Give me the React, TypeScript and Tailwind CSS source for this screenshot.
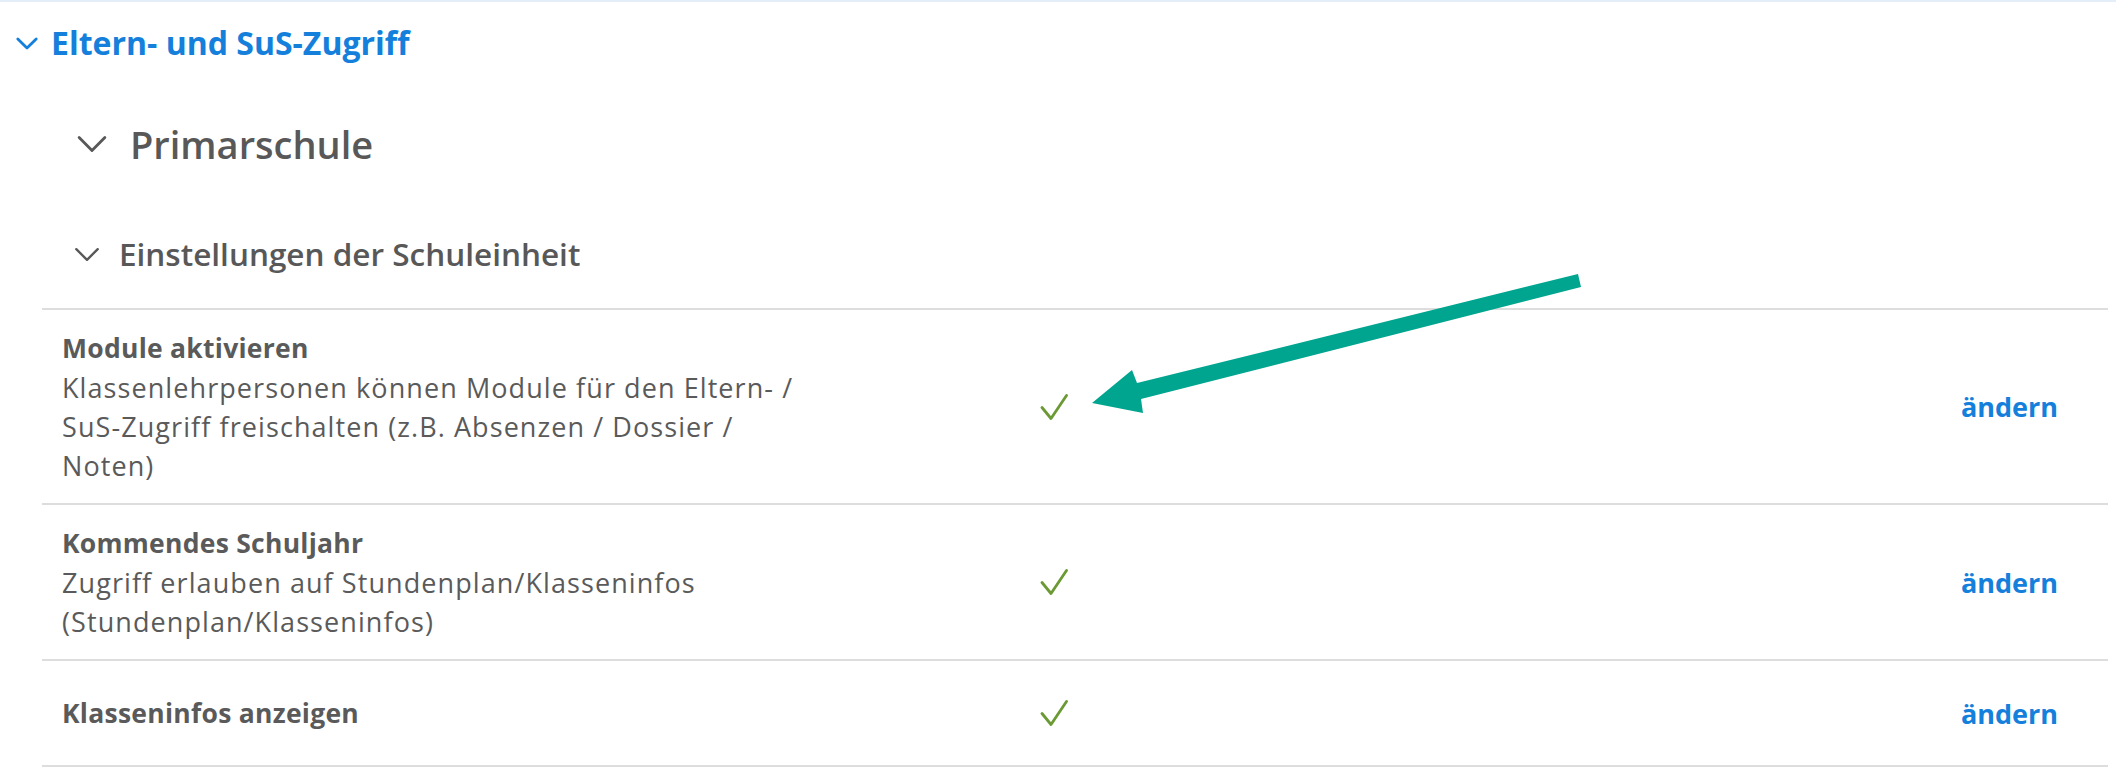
import type { ReactNode } from "react";

const rows = [
  {
    title: "Module aktivieren",
    desc: "Klassenlehrpersonen können Module für den Eltern- / SuS-Zugriff freischalten (z.B. Absenzen / Dossier / Noten)",
  },
  {
    title: "Kommendes Schuljahr",
    desc: "Zugriff erlauben auf Stundenplan/Klasseninfos (Stundenplan/Klasseninfos)",
  },
  {
    title: "Klasseninfos anzeigen",
    desc: "",
  },
];

function Chevron({ className, width = 2.2 }: { className: string; width?: number }) {
  return (
    <svg viewBox="0 0 24 14" fill="none" className={className}>
      <path d="M2 2l10 10L22 2" stroke="currentColor" strokeWidth={width} strokeLinecap="round" strokeLinejoin="round" />
    </svg>
  );
}

function Check() {
  return (
    <svg viewBox="0 0 28 26" fill="none" className="h-[26px] w-[28px] text-[#6b9a35]">
      <path d="M2 13.5l9 11L26.5 1.5" stroke="currentColor" strokeWidth="2.8" strokeLinecap="round" strokeLinejoin="round" />
    </svg>
  );
}

function Row({ title, children }: { title: string; children?: ReactNode }) {
  return (
    <div className="grid grid-cols-[998px_1fr_auto] items-center border-b-2 border-[#dddddd] py-[18.5px]">
      <div className="pl-5">
        <div className="max-w-[765px] text-[27px] leading-[39px] tracking-[0.04em] text-[#5a5a5a]">
          <div className="text-[26.5px] font-bold tracking-[0.01em]">{title}</div>
          {children}
        </div>
      </div>
      <div className="flex items-center">
        <Check />
      </div>
      <button className="pr-[50px] py-[14px] text-[27px] leading-[39px] font-bold text-[#1480dc]">ändern</button>
    </div>
  );
}

export default function App() {
  return (
    <div className="relative h-[772px] w-[2116px] overflow-hidden border-t-2 border-[#e3eef9] bg-white font-['Open_Sans',sans-serif]">
      <div className="flex h-[82px] items-center pl-4">
        <Chevron className="h-[13px] w-[22px] text-[#1480dc]" width={3} />
        <span className="ml-[13px] text-[32px] font-bold text-[#1480dc]">Eltern- und SuS-Zugriff</span>
      </div>

      <div className="flex h-[120px] items-center pl-[76px]">
        <Chevron className="h-[18px] w-[32px] text-[#585858]" />
        <span className="ml-[22px] text-[38px] font-semibold text-[#585858]">Primarschule</span>
      </div>

      <div className="flex h-[100px] items-center pl-[74px]">
        <Chevron className="h-[15px] w-[26px] text-[#585858]" />
        <span className="ml-[19px] text-[31.5px] font-semibold text-[#585858]">Einstellungen der Schuleinheit</span>
      </div>

      <div className="ml-[42px] mr-2 mt-1 border-t-2 border-[#dddddd]">
        {rows.map((r) => (
          <Row key={r.title} title={r.title}>
            {r.desc && <div>{r.desc}</div>}
          </Row>
        ))}
      </div>

      <svg className="pointer-events-none absolute left-0 top-0" width="2116" height="772" viewBox="0 0 2116 772">
        <polygon
          points="1092,401 1132,368 1137,381 1578,272 1581,285 1141,397 1143,411"
          fill="#00a58f"
        />
      </svg>
    </div>
  );
}
